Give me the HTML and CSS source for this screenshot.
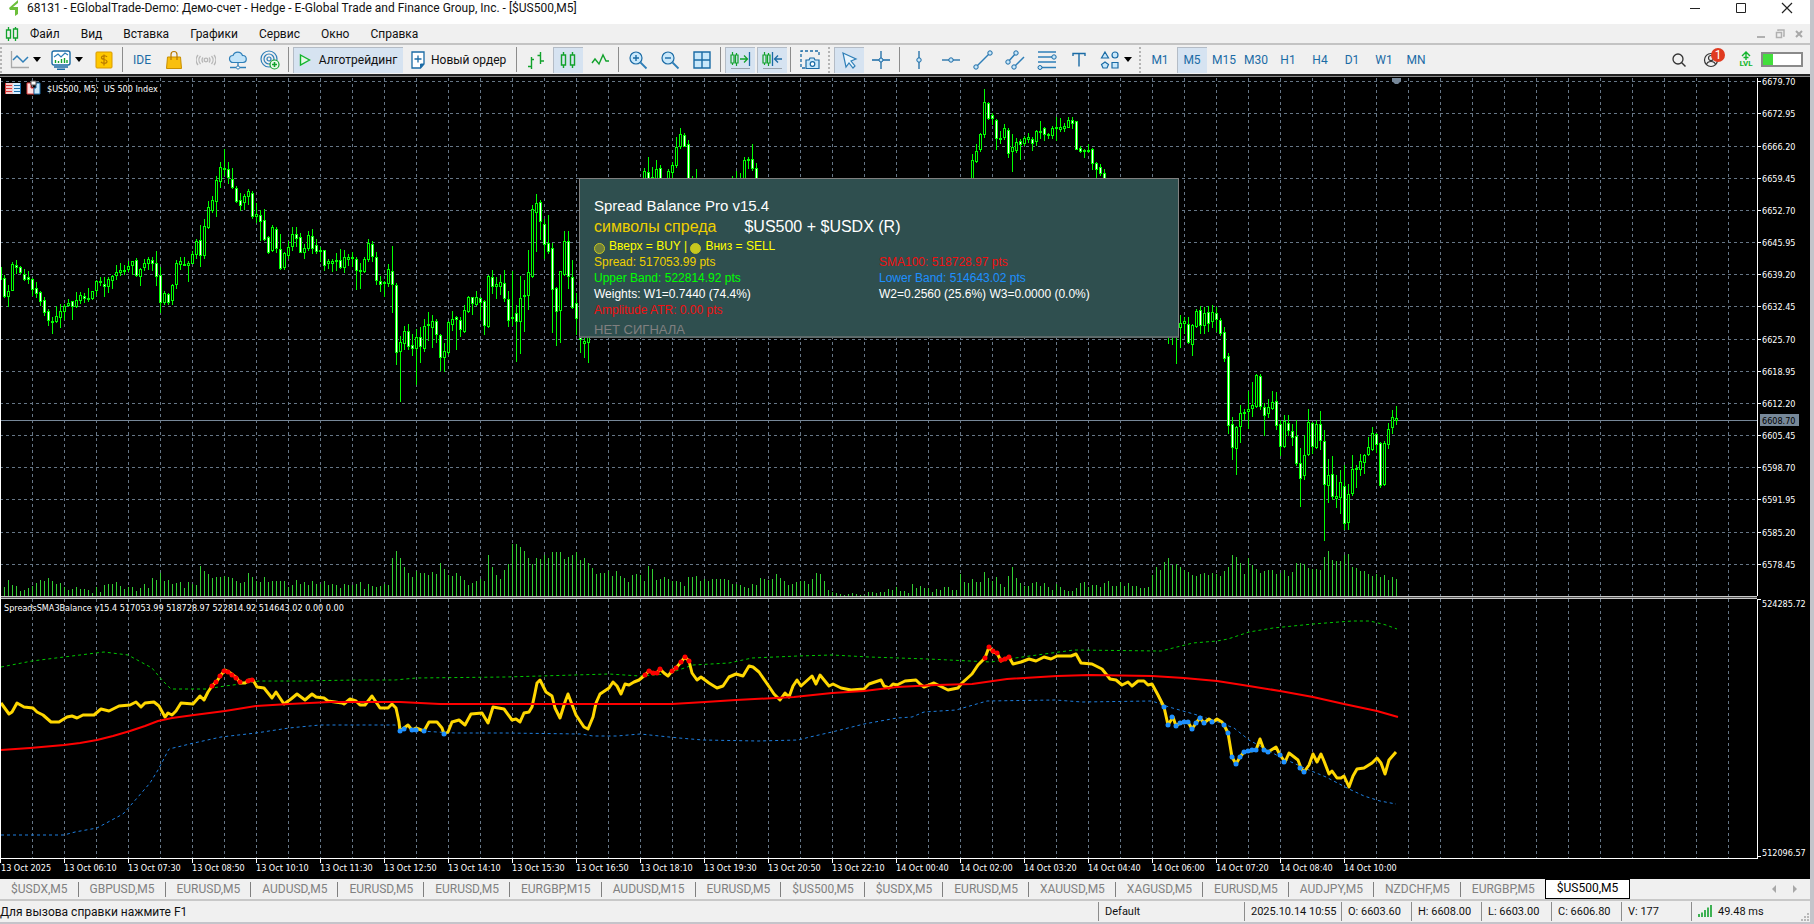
FILE: index.html
```html
<!DOCTYPE html>
<html lang="ru">
<head>
	<meta charset="UTF-8">
	<title>68131 - EGlobalTrade-Demo</title>
	<link rel="stylesheet" href="styles.css">
</head>
<body>
<div class="window">

	<header class="titlebar">
		<svg class="logo" width="12" height="16" viewBox="0 0 12 16"><path d="M10 0L1 8l1 2h5v6l3-2V7H5l5-4z" fill="#6cbf3a"/></svg>
		<span class="title">68131 - EGlobalTrade-Demo: Демо-счет - Hedge - E-Global Trade and Finance Group, Inc. - [$US500,M5]</span>
		<button type="button" class="win" aria-label="Свернуть"><svg width="12" height="12"><path d="M1 6.5h10" stroke="#222"/></svg></button>
		<button type="button" class="win" aria-label="Развернуть"><svg width="12" height="12"><path d="M1.5 1.5h9v9h-9z" fill="none" stroke="#222"/></svg></button>
		<button type="button" class="win" aria-label="Закрыть"><svg width="12" height="12"><path d="M1 1l10 10M11 1L1 11" stroke="#222" stroke-width="1.2"/></svg></button>
	</header>

	<nav class="menubar">
		<svg class="menu-icon" width="14" height="16" viewBox="0 0 14 16"><path d="M3.5 1v3M3.5 12v3M10.5 1v2M10.5 12v3M1.5 4h4v8h-4zM8.5 3h4v9h-4z" fill="none" stroke="#12a22c" stroke-width="1.3"/></svg>
		<button type="button">Файл</button>
		<button type="button">Вид</button>
		<button type="button">Вставка</button>
		<button type="button">Графики</button>
		<button type="button">Сервис</button>
		<button type="button">Окно</button>
		<button type="button">Справка</button>
		<div class="mdi">
			<button type="button" aria-label="Свернуть окно"><svg width="10" height="10"><path d="M1 8h8" stroke="#b0b0b0" stroke-width="2"/></svg></button>
			<button type="button" aria-label="Восстановить окно"><svg width="10" height="10"><path d="M3 2V1h6v6H8M1.5 3.5h5v5h-5z" fill="none" stroke="#b0b0b0" stroke-width="1.5"/></svg></button>
			<button type="button" aria-label="Закрыть окно"><svg width="10" height="10"><path d="M2 2l6 6M8 2L2 8" stroke="#a8a8a8" stroke-width="2"/></svg></button>
		</div>
	</nav>

	<div class="toolbar">
		<i class="grip first"></i>
		<button type="button" class="tb drop" aria-label="Тип графика">
			<svg width="20" height="20"><path d="M2.5 1v16.5H20" fill="none" stroke="#a9a9a9" stroke-width="1.3"/><path d="M4 10l4-4 6 6 5-5" fill="none" stroke="#2f7fb8" stroke-width="1.5"/></svg>
			<i class="caret"></i>
		</button>
		<button type="button" class="tb drop" aria-label="Индикаторы">
			<svg width="20" height="20"><rect x="1" y="1" width="18" height="14" rx="2" fill="#fff" stroke="#1b6ba5" stroke-width="1.4"/><path d="M3 7l4-3 3 3 4-4 3 2" fill="none" stroke="#2f7fb8" stroke-width="1.2"/><path d="M4.5 13v-3M7.5 13v-2M10.5 13V9M13.5 13V8M16 13v-3" stroke="#12a22c" stroke-width="1.4"/><path d="M3 17h14M6 19.3h8" stroke="#1b6ba5" stroke-width="1.5"/></svg>
			<i class="caret"></i>
		</button>
		<button type="button" class="tb" aria-label="Депозит"><svg width="20" height="20"><rect x="2" y="2" width="16" height="16" rx="1" fill="#ffc800" stroke="#d99a00"/><path d="M13 7c-1-2-6-1.5-5.5 1 .5 2 5 1 5.5 3.3.4 2.3-4.5 2.7-6 .5M10 4.5v11" fill="none" stroke="#b87800" stroke-width="1.2"/></svg></button>
		<i class="sep"></i>
		<button type="button" class="tb ide">IDE</button>
		<button type="button" class="tb" aria-label="Маркет"><svg width="20" height="20"><path d="M3.5 7h13l1 11.5h-15z" fill="#f9bf0f" stroke="#c98f00"/><path d="M7 10V4.5a3 3 0 0 1 6 0V10" fill="none" stroke="#b87800" stroke-width="1.2"/></svg></button>
		<button type="button" class="tb" aria-label="Сигналы"><svg width="20" height="20" fill="none" stroke="#b7b7b7" stroke-width="1.3"><circle cx="10" cy="10" r="1.8"/><path d="M7 7.500a4 4 0 0 0 0 5M13 7.500a4 4 0 0 1 0 5M4.500 6a6 6 0 0 0 0 8M15.500 6a6 6 0 0 1 0 8M2 5a8 8 0 0 0 0 10M18 5a8 8 0 0 1 0 10"/></svg></button>
		<button type="button" class="tb" aria-label="VPS"><svg width="20" height="20"><path d="M5 12.500a3.500 3.500 0 0 1 0-7 5 5 0 0 1 9.500 0 3.500 3.500 0 0 1 .5 7z" fill="#c3e4f9" stroke="#2f7fb8" stroke-width="1.2"/><path d="M10 12.500v4M2 17.500h6M12 17.500h6" stroke="#2f7fb8" stroke-width="1.3"/><circle cx="10" cy="17.500" r="1.6" fill="#fff" stroke="#2f7fb8"/></svg></button>
		<button type="button" class="tb" aria-label="Сеть"><svg width="20" height="20" fill="none" stroke="#2f7fb8" stroke-width="1.2"><circle cx="9" cy="9" r="8"/><circle cx="9" cy="9" r="5"/><circle cx="9" cy="9" r="2"/><circle cx="14.500" cy="14.500" r="4.500" fill="#e9f9ea" stroke="#12a22c"/><path d="M14.500 12v5M12 14.500h5" stroke="#12a22c" stroke-width="1.6"/></svg></button>
		<i class="sep"></i>
		<button type="button" class="tb on algo"><svg width="12" height="14"><path d="M1.5 2l9 5-9 5z" fill="#e6f8e8" stroke="#12b52c" stroke-width="1.4"/></svg>Алготрейдинг</button>
		<button type="button" class="tb order"><svg width="14" height="18"><path d="M1 1h12v12l-3.500 4H1z" fill="#fff" stroke="#1b6ba5" stroke-width="1.3"/><path d="M13 13H9.500v4" fill="#1b6ba5" stroke="#1b6ba5"/><path d="M7 4.500v7M3.500 8h7" stroke="#1b6ba5" stroke-width="1.3"/></svg>Новый ордер</button>
		<i class="sep"></i>
		<button type="button" class="tb" aria-label="Бары"><svg width="20" height="20"><path d="M5.5 7v12M2 16.500h3.500M5.500 9.500H8M14.500 2v12M11.500 5.500h3M14.500 11H18" stroke="#12a22c" stroke-width="1.4"/></svg></button>
		<button type="button" class="tb on" aria-label="Свечи"><svg width="20" height="20"><path d="M5.5 2v3M5.500 15v3M14.500 2v3M14.500 15v3M3.500 5h4v10h-4zM12.500 5h4v10h-4z" fill="none" stroke="#12a22c" stroke-width="1.4"/></svg></button>
		<button type="button" class="tb" aria-label="Линия"><svg width="20" height="20"><path d="M2 13l3-4 4 5 4-9 3 6h3" fill="none" stroke="#12a22c" stroke-width="1.4"/></svg></button>
		<i class="sep"></i>
		<button type="button" class="tb" aria-label="Увеличить"><svg width="20" height="20"><circle cx="8" cy="8" r="6" fill="#c9e8fb" stroke="#1b6ba5" stroke-width="1.2"/><path d="M8 5v6M5 8h6" stroke="#1b6ba5" stroke-width="1.4"/><path d="M12.500 12.500l6 6" stroke="#2f7fb8" stroke-width="1.8"/></svg></button>
		<button type="button" class="tb" aria-label="Уменьшить"><svg width="20" height="20"><circle cx="8" cy="8" r="6" fill="#c9e8fb" stroke="#1b6ba5" stroke-width="1.2"/><path d="M5 8h6" stroke="#1b6ba5" stroke-width="1.4"/><path d="M12.500 12.500l6 6" stroke="#2f7fb8" stroke-width="1.8"/></svg></button>
		<button type="button" class="tb" aria-label="Плитка"><svg width="20" height="20"><path d="M2 2h16v16H2zM10 2v16M2 10h16" fill="#c9e8fb" stroke="#1b6ba5" stroke-width="1.4"/></svg></button>
		<i class="sep"></i>
		<button type="button" class="tb on" aria-label="Автопрокрутка"><svg width="22" height="20"><path d="M3.500 2v3M3.500 13v2M7.500 3v2M7.500 13v3M2 5h3v8H2zM6.500 5h2.500v8H6.500z" fill="none" stroke="#12a22c" stroke-width="1.2"/><path d="M11 9h7M15 5.500L18.500 9 15 12.500" fill="none" stroke="#12a22c" stroke-width="1.3"/><path d="M20.500 2v14" stroke="#1b6ba5" stroke-width="1.3"/><path d="M2 18.500h19" stroke="#9aa3ad"/></svg></button>
		<button type="button" class="tb on" aria-label="Сдвиг графика"><svg width="22" height="20"><path d="M3.500 2v3M3.500 13v2M7.500 3v2M7.500 13v3M2 5h3v8H2zM6.500 5h2.500v8H6.500z" fill="none" stroke="#12a22c" stroke-width="1.2"/><path d="M21 9h-7M17 5.500L13.500 9l3.500 3.500" fill="none" stroke="#1b6ba5" stroke-width="1.3"/><path d="M11.500 2v14" stroke="#1b6ba5" stroke-width="1.3"/><path d="M2 18.500h19" stroke="#9aa3ad"/></svg></button>
		<i class="sep"></i>
		<button type="button" class="tb" aria-label="Снимок экрана"><svg width="20" height="20"><path d="M5 18H1V1h18v6" fill="none" stroke="#1b6ba5" stroke-width="1.3" stroke-dasharray="3 2"/><path d="M6 10h3l1-2h4l1 2h4v8.500H6z" fill="#c9e8fb" stroke="#1b6ba5" stroke-width="1.2"/><circle cx="12.500" cy="14" r="2.3" fill="#fff" stroke="#1b6ba5" stroke-width="1.2"/></svg></button>
		<i class="grip"></i>
		<button type="button" class="tb on" aria-label="Курсор"><svg width="20" height="20"><path d="M4 3l13 6-5 2 4 5-2 2-4-5-3 4z" fill="#e9f5fd" stroke="#2f7fb8" stroke-width="1.2"/></svg></button>
		<button type="button" class="tb" aria-label="Перекрестие"><svg width="20" height="20"><path d="M10 1v18M1 10h18" stroke="#1b6ba5" stroke-width="1.3"/><circle cx="10" cy="10" r="2" fill="#c9e8fb" stroke="#1b6ba5"/></svg></button>
		<i class="sep"></i>
		<button type="button" class="tb" aria-label="Вертикальная линия"><svg width="20" height="20"><path d="M10 1v18" stroke="#1b6ba5" stroke-width="1.3"/><circle cx="10" cy="10" r="2.2" fill="#c9e8fb" stroke="#1b6ba5"/></svg></button>
		<button type="button" class="tb" aria-label="Горизонтальная линия"><svg width="20" height="20"><path d="M1 10h18" stroke="#1b6ba5" stroke-width="1.3"/><circle cx="10" cy="10" r="2.2" fill="#c9e8fb" stroke="#1b6ba5"/></svg></button>
		<button type="button" class="tb" aria-label="Трендовая линия"><svg width="20" height="20"><path d="M3 17L17 3" stroke="#2f7fb8" stroke-width="1.5"/><circle cx="3" cy="17" r="2.2" fill="#c9e8fb" stroke="#1b6ba5"/><circle cx="17" cy="3" r="2.2" fill="#c9e8fb" stroke="#1b6ba5"/></svg></button>
		<button type="button" class="tb" aria-label="Канал"><svg width="20" height="20"><path d="M3 12l8-9M9 17L19 7" stroke="#2f7fb8" stroke-width="1.5"/><circle cx="3" cy="12" r="2.2" fill="#c9e8fb" stroke="#1b6ba5"/><circle cx="11" cy="3" r="2.2" fill="#c9e8fb" stroke="#1b6ba5"/><circle cx="9" cy="17" r="2.2" fill="#c9e8fb" stroke="#1b6ba5"/></svg></button>
		<button type="button" class="tb" aria-label="Фибоначчи"><svg width="20" height="20"><path d="M1 2h18M1 7h18M1 12h18M1 17.500h18" stroke="#2f7fb8" stroke-width="1.4"/><circle cx="17" cy="7" r="2.2" fill="#c9e8fb" stroke="#1b6ba5"/><circle cx="3" cy="17.500" r="2" fill="#c9e8fb" stroke="#1b6ba5"/></svg></button>
		<button type="button" class="tb" aria-label="Текст"><svg width="20" height="20"><path d="M4 6V3.500h12V6M10 3.500v13" fill="none" stroke="#1b6ba5" stroke-width="1.4"/></svg></button>
		<button type="button" class="tb drop" aria-label="Объекты">
			<svg width="20" height="20" fill="#c9e8fb" stroke="#1b6ba5" stroke-width="1.2"><path d="M5 2l3.500 6h-7zM5 12l3.500 2.500L7 18H3l-1.500-3.500zM12 12.500h6V18h-6z"/><circle cx="15" cy="5" r="3"/></svg>
			<i class="caret"></i>
		</button>
		<i class="grip"></i>
		<button type="button" class="tb tf">M1</button>
		<button type="button" class="tb tf on">M5</button>
		<button type="button" class="tb tf">M15</button>
		<button type="button" class="tb tf">M30</button>
		<button type="button" class="tb tf">H1</button>
		<button type="button" class="tb tf">H4</button>
		<button type="button" class="tb tf">D1</button>
		<button type="button" class="tb tf">W1</button>
		<button type="button" class="tb tf">MN</button>
		<div class="right">
			<button type="button" class="tb" aria-label="Поиск"><svg width="16" height="16"><circle cx="7" cy="7" r="5" fill="none" stroke="#333" stroke-width="1.3"/><path d="M10.500 10.500l4 4" stroke="#333" stroke-width="1.5"/></svg></button>
			<button type="button" class="tb user" aria-label="Уведомления"><svg width="16" height="16" fill="none" stroke="#333" stroke-width="1.2"><circle cx="8" cy="8" r="6.500"/><circle cx="8" cy="6" r="2.500"/><path d="M3.500 12.500c1-4 8-4 9 0"/></svg><span class="badge">1</span></button>
			<span class="lvl"><svg width="10" height="9"><path d="M5 9V1M1 5l4-4 4 4M2.500 6.500h5" fill="none" stroke="#12b52c" stroke-width="1.4"/></svg>LVL</span>
			<span class="battery"><i></i></span>
		</div>
	</div>

	<main class="chart">
		<div class="plot">
			<svg id="plot" width="100%" height="801"></svg>
			<section class="panel">
				<h1>Spread Balance Pro v15.4</h1>
				<p class="symbols"><span class="gold">символы спреда</span><span>$US500 + $USDX (R)</span></p>
				<p class="hint"><i class="dot dim"></i>Вверх = BUY | <i class="dot"></i>Вниз = SELL</p>
				<div class="values">
					<span class="gold">Spread: 517053.99 pts</span><span class="red">SMA100: 518728.97 pts</span>
					<span class="green">Upper Band: 522814.92 pts</span><span class="blue">Lower Band: 514643.02 pts</span>
					<span>Weights: W1=0.7440 (74.4%)</span><span>W2=0.2560 (25.6%) W3=0.0000 (0.0%)</span>
					<span class="red">Amplitude ATR: 0.00 pts</span>
				</div>
				<p class="signal">НЕТ СИГНАЛА</p>
			</section>
		</div>
		<svg id="axis" width="53" height="801"></svg>
	</main>

	<nav class="tabs">
		<button type="button">$USDX,M5</button>
		<button type="button">GBPUSD,M5</button>
		<button type="button">EURUSD,M5</button>
		<button type="button">AUDUSD,M5</button>
		<button type="button">EURUSD,M5</button>
		<button type="button">EURUSD,M5</button>
		<button type="button">EURGBP,M15</button>
		<button type="button">AUDUSD,M15</button>
		<button type="button">EURUSD,M5</button>
		<button type="button">$US500,M5</button>
		<button type="button">$USDX,M5</button>
		<button type="button">EURUSD,M5</button>
		<button type="button">XAUUSD,M5</button>
		<button type="button">XAGUSD,M5</button>
		<button type="button">EURUSD,M5</button>
		<button type="button">AUDJPY,M5</button>
		<button type="button">NZDCHF,M5</button>
		<button type="button">EURGBP,M5</button>
		<button type="button" class="active">$US500,M5</button>
		<svg class="scroll" width="26" height="10"><path d="M4 1v8L0 5zM21 1v8l4-4z" fill="#a8a8a8"/></svg>
	</nav>

	<footer class="statusbar">
		<span class="help">Для вызова справки нажмите F1</span>
		<span class="cell profile">Default</span>
		<span class="cell date">2025.10.14 10:55</span>
		<span class="cell">O: 6603.60</span>
		<span class="cell">H: 6608.00</span>
		<span class="cell">L: 6603.00</span>
		<span class="cell">C: 6606.80</span>
		<span class="cell">V: 177</span>
		<span class="cell ping"><svg width="14" height="12"><path d="M1 12V9M4 12V7.500M7 12V5M10 12V2.500M13 12V0" stroke="#12a22c" stroke-width="1.6"/></svg>49.48 ms</span>
		<svg class="resize" width="9" height="9"><path d="M6 0h2v2H6zM3 3h2v2H3zM6 3h2v2H6zM0 6h2v2H0zM3 6h2v2H3zM6 6h2v2H6z" fill="#b8b8b8"/></svg>
	</footer>
</div>
<script src="chart.js"></script>
</body>
</html>
```
FILE: styles.css
```css
body{
	margin: 0;
	background: #c4c4ca;
	font: 12px/16px Roboto, "Noto Sans", sans-serif;
	color: #111;
}

button{
	margin: 0;
	padding: 0;
	border: 0;
	background: none;
	font: inherit;
	color: inherit;
}

h1, p{
	margin: 0;
	font-weight: normal;
}

.window{
	margin-right: 4px;
	background: #f0f0f0;
}

/* title and menu */
.titlebar{
	display: flex;
	align-items: center;
	height: 24px;
	padding: 0 0 8px 8px;
	box-sizing: border-box;
	background: #fff;
}

.logo{
	margin-right: 7px;
}

.title{
	flex: 1;
	white-space: nowrap;
}

.win{
	width: 46px;
	display: flex;
	justify-content: center;
}

.menubar{
	display: flex;
	align-items: center;
	height: 19px;
	padding-left: 5px;
	border-bottom: 2px solid #c3c3c3;
}

.menubar > button{
	padding: 0 10px 0 11px;
}

.mdi{
	display: flex;
	gap: 9px;
	margin-left: auto;
	margin-right: 6px;
}

.mdi button{
	display: flex;
}

/* toolbar */
.toolbar{
	display: flex;
	align-items: center;
	gap: 2px;
	height: 29px;
	border-bottom: 2px solid #222;
	white-space: nowrap;
}

.tb{
	display: flex;
	align-items: center;
	justify-content: center;
	flex: none;
	width: 30px;
	height: 26px;
}

.tb.on{
	background: #d6e3f1;
	box-shadow: inset 1px 1px 0 #b4bcc6;
}

.tb.drop{
	width: 40px;
	gap: 4px;
}

.caret{
	border: 4px solid transparent;
	border-top: 5px solid #000;
	border-bottom: 0;
}

.tb.ide, .tb.tf{
	color: #1b6ba5;
}

.tb.algo{
	width: 110px;
	gap: 8px;
}

.tb.order{
	width: 108px;
	gap: 6px;
	justify-content: flex-start;
	padding-left: 6px;
	box-sizing: border-box;
}

.sep{
	flex: none;
	width: 1px;
	height: 25px;
	margin: 0 2px 0 1px;
	background: #8c8c8c;
}

.grip{
	flex: none;
	height: 26px;
	margin: 0 2px 0 1px;
	border-left: 2px dotted #b4b4b4;
}

.grip.first{
	margin: 0 1px 0 0;
}

.right{
	display: flex;
	align-items: center;
	gap: 2px;
	margin-left: auto;
	padding-right: 7px;
}

.user{
	position: relative;
}

.badge{
	position: absolute;
	top: 1px;
	right: 1px;
	width: 14px;
	height: 14px;
	border-radius: 7px;
	background: #e03a20;
	color: #fff;
	line-height: 14px;
}

.lvl{
	display: flex;
	flex-direction: column;
	align-items: center;
	width: 26px;
	margin-left: 5px;
	font-size: 8px;
	line-height: 8px;
	font-weight: bold;
	color: #12b52c;
}

.battery{
	width: 38px;
	height: 11px;
	border: 2px solid #8a8a8a;
	background: #fff;
}

.battery i{
	display: block;
	width: 10px;
	height: 11px;
	background: #43df3c;
}

/* chart */
.chart{
	display: flex;
	border-top: 1px solid #8a8a8a;
	background: #000;
	padding-top: 1px;
}

.chart svg{
	display: block;
	font: 9px "DejaVu Sans Condensed", "DejaVu Sans", sans-serif;
	fill: #fff;
}

.plot{
	position: relative;
	flex: 1;
	min-width: 0;
	overflow: hidden;
}

.crisp{
	shape-rendering: crispEdges;
	fill: none;
}

.grid{
	stroke: #667686;
	stroke-dasharray: 3 3;
}

.frame{
	stroke: #fff;
}

.price{
	stroke: #778899;
}

.divider{
	stroke: #c8c8c8;
}

.wick, .up, .down{
	stroke: #0f0;
}

.up{
	fill: #000;
}

.down{
	fill: #fff;
}

.volume{
	stroke: #32cd32;
}

.spread, .sma{
	fill: none;
	stroke: gold;
	stroke-width: 3;
	stroke-linejoin: round;
}

.sma{
	stroke: #f00;
	stroke-width: 2;
}

.upper, .lower{
	fill: none;
	stroke: #00c800;
	stroke-dasharray: 3 3;
}

.lower{
	stroke: #1e7fe0;
}

/* indicator window over the chart */
.panel{
	position: absolute;
	left: 579px;
	top: 100px;
	width: 600px;
	height: 160px;
	box-sizing: border-box;
	padding: 17px 14px 0;
	border: 1px solid #808080;
	border-bottom: 2px solid #5d6a6a;
	background: #2f4f4f;
	color: #fff;
	font: 12px/16px "Liberation Sans", Arial, sans-serif;
}

.panel h1{
	font-size: 15px;
	line-height: 20px;
}

.symbols{
	display: flex;
	gap: 28px;
	font-size: 16px;
	line-height: 22px;
}

.hint{
	color: #ff0;
}

.values{
	display: grid;
	grid-template-columns: 285px 1fr;
}

.signal{
	font-size: 13px;
	line-height: 24px;
	color: #808080;
}

.gold{
	color: #f0d000;
}

.red{
	color: #f01010;
}

.green{
	color: #0f0;
}

.blue{
	color: #1e90ff;
}

.dot{
	display: inline-block;
	width: 9px;
	height: 9px;
	margin-right: 4px;
	border: 1px solid #c8c81e;
	border-radius: 50%;
	background: #c8c81e;
	vertical-align: -4px;
}

.dot.dim{
	background: #6f7f3a;
}

/* chart tabs */
.tabs{
	display: flex;
	align-items: center;
	height: 20px;
	border-bottom: 2px solid #c8c8c8;
	color: #808080;
	white-space: nowrap;
}

.tabs button{
	padding: 0 10px 0 11px;
	line-height: 15px;
	border-right: 1px solid #808080;
}

.tabs button:nth-last-of-type(2){
	border-right: 0;
}

.tabs .active{
	padding: 1px 11px 2px;
	border: 1px solid #000;
	background: #fff;
	color: #000;
}

.scroll{
	margin-left: auto;
	margin-right: 12px;
}

/* status bar */
.statusbar{
	display: flex;
	align-items: center;
	height: 21px;
	white-space: nowrap;
}

.help{
	flex: 1;
}

.cell{
	width: 63px;
	padding-left: 6px;
	border-left: 1px solid #8c8c8c;
	font-size: 11px;
	line-height: 19px;
}

.profile{
	width: 139px;
}

.date{
	width: 90px;
}

.ping{
	width: 103px;
}

.ping svg{
	margin-right: 6px;
	vertical-align: -2px;
}

.resize{
	align-self: flex-end;
}
```
FILE: chart.js
```js
// y values are window pixels, the chart area starts at TOP
var TOP = 78;
var STEP = 4;      // pixels per bar
var BASE = 596;    // bottom of the price pane
var SUB = 599;     // top of the indicator pane
var BOTTOM = 858;
var WIDTH = 4000;  // drawn wider than the pane, cut off by it

// [first bar, "high top bottom low direction; ..."]
var candles = [
	[0, "267 267 279 279 d;275 278 296 297 d;285 291 296 306 u;262 264 290 290 u;260 265 267 273 d;266 267 272 273 d;269 274 279 280 d;271 277 279 283 d;278 279 289 295 d;282 288 293 297 d;" +
		"291 292 301 305 d;297 300 312 315 d;309 311 320 325 d;317 321 322 333 u;306 316 321 322 u;304 311 317 327 u;304 306 311 319 u;299 303 305 306 u;301 301 306 319 d;292 300 306 307 u;" +
		"292 295 300 303 u;293 296 298 302 d;288 298 299 301 u;291 291 298 299 u;280 281 290 295 u;277 281 282 285 u;277 284 286 296 d;277 279 286 292 u;275 276 280 288 u;265 272 275 279 u;" +
		"263 270 272 275 u;265 270 271 274 u;261 266 269 271 u;261 261 265 274 u;258 260 275 276 d;268 269 276 285 u;259 263 267 270 u;257 259 263 269 u;257 260 263 270 d;251 263 276 285 d;" +
		"267 275 302 312 d;291 293 302 304 u;293 294 302 304 d;284 285 300 304 u;260 263 284 288 u;257 261 264 269 u;257 264 265 265 u;261 263 265 281 u;251 254 263 263 u;239 241 254 258 u;" +
		"225 240 255 266 d;219 226 255 258 u;201 207 227 228 u;196 200 210 212 u;176 180 201 216 u;162 167 181 187 u;149 168 169 175 u;162 169 177 183 d;168 179 187 188 d;186 188 201 202 d;" +
		"193 200 205 210 d;194 196 202 209 u;189 191 196 204 u;191 193 216 218 d;203 214 216 222 u;210 215 221 240 d;209 220 239 240 d;236 237 252 253 d;225 227 250 251 u;227 229 248 252 d;" +
		"234 249 268 269 d;252 253 267 269 u;241 247 255 258 u;227 234 246 250 u;227 234 238 246 d;233 237 252 252 d;244 248 252 258 u;231 235 248 250 u;229 236 248 253 d;239 245 251 253 d;" +
		"247 250 251 261 u;250 250 265 270 d;259 261 263 268 u;259 261 263 271 u;253 260 261 270 u;249 260 267 268 d;250 257 267 272 u;254 257 259 265 u;252 257 258 266 u;257 259 270 289 d;" +
		"263 270 271 288 u;257 259 271 272 u;239 243 259 261 u;241 244 256 261 d;252 257 280 284 d;276 281 284 291 d;281 282 283 296 u;264 269 283 286 u;246 271 284 312 d;283 285 352 364 d;" +
		"336 342 351 401 u;326 331 343 349 u;324 331 346 349 d;334 345 348 355 d;329 337 348 384 u;327 337 346 362 d;319 326 348 351 u;312 324 325 340 u;315 321 327 347 u;319 321 334 342 d;" +
		"334 335 357 370 d;343 351 357 371 u;321 322 352 354 u;311 319 324 330 u;316 317 319 349 d;317 320 329 336 d;305 310 331 332 u;296 297 311 312 u;297 297 303 314 d;291 297 304 305 u;" +
		"297 298 302 319 d;300 301 325 334 d;275 276 326 327 u;270 277 286 293 d;277 284 286 298 u;275 282 286 294 u;270 283 298 301 d;291 299 320 326 d;271 317 318 325 u;305 313 321 361 d;" +
		"276 298 321 353 u;280 295 296 331 u;250 272 295 309 u;205 209 276 277 u;194 203 212 251 u;200 202 221 239 d;219 224 244 258 d;215 243 251 253 d;243 248 289 332 d;287 288 311 345 d;" +
		"271 271 310 342 u;231 241 274 275 u;231 241 276 288 d;260 277 307 308 d;293 303 318 334 d;320 325 339 352 d;325 341 343 357 u;325 327 342 362 u"],
	[161, "168 171 200 210 u;157 172 200 210 d;167 177 200 210 d;160 169 200 210 u;165 168 200 210 d;179 185 200 210 u;169 171 200 210 u;162 165 172 177 u;137 147 165 167 u;128 134 146 148 u;" +
		"133 135 146 146 d;140 144 180 190 d;176 185 200 210 u;169 185 200 210 u"],
	[183, "176 185 200 210 u;171 185 200 210 u;173 185 200 210 u;157 160 180 190 u;157 159 160 168 u;144 159 168 170 d;163 168 180 190 d"],
	[243, "154 160 180 190 u;144 151 161 162 u;133 134 149 151 u;89 102 134 137 u;102 103 118 119 d;113 115 118 124 d;119 120 138 149 d;131 138 139 143 u;124 128 137 139 u;128 130 153 157 d;" +
		"134 147 151 171 u;138 142 150 152 u;139 141 144 159 d;136 138 143 145 u;133 137 139 142 u;137 139 143 150 d;130 131 141 145 u;121 131 132 138 u;127 128 134 140 d;133 134 135 138 u;" +
		"126 128 135 138 u;117 127 128 140 u;118 127 129 131 u;123 126 128 131 u;117 120 127 127 u;117 120 123 128 d;121 121 149 149 d;146 148 151 152 d;149 150 151 157 u;144 150 151 152 u;" +
		"148 149 163 169 d;162 163 169 180 d;164 167 173 175 d;169 173 180 190 d"],
	[292, "320 325 330 343 u;320 325 330 344 u;320 325 330 363 u;315 323 327 347 u;317 321 323 333 u;317 324 342 343 d;324 325 344 355 u;309 311 326 327 u;" +
		"306 310 325 333 d;307 313 325 333 u;306 312 323 331 d;305 312 321 327 u;307 313 319 331 d;318 320 333 335 d;327 332 358 361 d;353 356 425 433 d;417 424 447 459 d;426 427 448 474 u;" +
		"405 413 426 442 u;409 412 413 419 u;391 409 411 428 u;382 405 408 416 u;374 375 406 407 u;374 376 406 409 d;403 407 415 435 d;399 407 413 417 u;391 402 408 409 u;392 401 425 429 d;" +
		"420 424 446 455 d;415 421 446 447 u;415 423 430 435 d;424 431 437 445 d;420 436 463 465 d;448 463 478 506 d;435 455 475 479 u;409 422 454 455 u;422 423 446 453 d;420 424 447 448 u;" +
		"411 424 440 449 d;430 441 484 540 d;459 475 485 502 u;456 474 496 499 d;475 496 498 507 u;470 482 497 513 u;465 486 523 529 d;484 494 522 529 u;455 469 493 495 u;465 468 469 487 u;" +
		"454 461 469 475 u;454 455 462 473 u;437 447 454 455 u;427 433 449 450 u;433 434 444 452 d;442 443 485 487 d;441 443 484 485 u;423 429 444 448 u;410 417 427 433 u;406 418 420 424 u"]
];

// tick volume, bar 1 onwards
var volume = [
	9,16,11,10,5,6,8,10,13,16,15,18,15,12,13,9,6,7,9,7,7,6,3,9,4,11,12,12,14,10,7,9,9,5,8,12,8,18,16,23,
	15,16,12,13,14,8,14,12,11,30,25,22,18,19,19,20,19,18,15,13,14,23,19,15,14,19,14,15,15,15,15,9,11,16,12,14,11,15,12,12,
	15,11,12,11,8,12,11,11,12,14,7,12,10,9,10,12,11,38,45,38,29,23,19,25,23,23,21,24,22,33,27,21,20,23,20,16,11,13,15,17,
	15,41,29,21,17,26,32,52,52,49,45,38,32,38,37,41,38,44,44,44,37,39,41,44,36,38,33,28,22,23,23,25,20,25,20,18,14,21,22,21,
	15,30,27,16,17,19,17,15,15,14,10,19,19,20,15,17,15,17,17,17,17,16,12,12,11,9,8,12,11,18,17,16,17,22,18,15,11,12,14,15,
	15,12,17,23,22,15,6,4,3,2,1,2,3,2,1,1,4,4,3,4,4,7,6,9,5,5,3,12,8,10,8,8,4,7,6,9,9,6,6,22,
	14,13,17,14,14,24,18,15,19,12,9,20,29,18,13,10,10,13,14,10,13,9,6,12,9,6,5,5,8,13,14,9,11,11,9,13,15,10,10,14,
	10,13,10,10,8,8,9,21,29,26,34,38,31,32,29,26,24,21,20,22,23,21,23,22,20,25,29,41,39,33,22,38,31,27,23,25,26,26,22,23,
	26,20,24,33,33,32,28,27,27,26,39,45,36,35,35,41,42,29,28,25,25,22,20,22,19,21,16,19,17
];

var spread = "1,703 9,714 12,712 17,703 24,707 33,708 37,712 43,715 51,722 59,722 67,717 72,716 77,718 83,715 94,715 101,709 109,711 119,706 130,705 136,702 141,707 145,703 154,702 159,706 165,717 168,713 172,715 176,711 181,703 193,704 200,696 204,700 208,692 212,686 217,681 221,675 225,670 229,672 237,678 240,683 245,683 249,680 253,680 257,687 264,688 272,698 276,692 284,704 291,699 297,694 305,700 312,694 316,697 324,698 328,701 342,703 344,704 350,699 356,701 360,705 365,705 372,696 380,708 388,708 392,704 396,708 399,722 400,731 408,725 412,730 416,728 424,731 429,722 437,722 442,728 444,734 448,732 452,722 459,720 465,725 471,714 482,713 488,723 493,707 504,709 512,720 516,719 520,722 524,713 529,712 532,707 535,693 537,683 540,680 546,692 552,696 555,708 560,718 565,702 568,694 576,715 584,727 588,729 593,717 596,703 600,694 609,688 613,682 617,686 621,694 625,684 629,685 634,682 639,680 645,675 649,671 653,673 657,673 660,669 664,673 668,676 672,671 676,668 681,662 685,657 689,661 692,673 697,680 701,677 709,683 717,688 723,686 729,677 736,674 743,676 749,666 753,667 759,672 770,688 774,694 780,700 785,693 789,697 793,686 797,680 801,686 812,676 816,684 820,675 829,686 833,684 841,688 851,690 864,689 869,684 881,680 884,686 889,688 893,684 897,685 905,681 916,680 920,684 924,687 934,683 942,687 948,690 958,688 962,683 972,674 978,665 985,658 989,647 993,652 997,653 1001,661 1005,659 1009,657 1013,664 1021,662 1029,659 1036,661 1044,657 1051,659 1057,656 1071,656 1076,654 1081,663 1092,664 1102,669 1110,679 1116,680 1122,685 1128,682 1132,686 1138,681 1144,681 1148,685 1152,684 1158,695 1164,707 1168,725 1173,717 1176,726 1180,723 1188,722 1192,729 1196,723 1200,718 1204,723 1209,719 1213,722 1217,719 1222,722 1224,725 1228,733 1232,757 1236,764 1240,757 1244,752 1256,750 1260,739 1264,750 1268,752 1276,747 1280,755 1285,762 1289,753 1298,760 1301,768 1304,772 1309,765 1313,754 1317,762 1321,754 1324,761 1329,774 1332,771 1337,778 1341,778 1344,776 1349,787 1353,776 1357,769 1364,768 1372,763 1377,758 1381,763 1385,774 1389,760 1396,752";
var sma = "1,750 30,748 64,745 80,743 97,740 113,736 130,731 145,726 158,721 172,718 194,715 225,711 256,706 289,704 330,702 400,702 440,704 672,704 705,702 736,700 794,697 832,693 864,691 897,687 936,685 972,684 1007,679 1057,676 1090,675 1152,676 1184,678 1217,681 1249,686 1280,691 1313,697 1344,704 1377,711 1398,717";
var upper = "1,667 32,661 64,657 104,652 128,655 152,668 162,680 171,689 206,689 225,686 241,684 259,681 300,681 356,680 395,680 416,678 506,677 609,674 640,676 667,674 693,665 729,663 752,658 798,656 832,655 869,657 928,659 991,662 1015,658 1074,650 1161,651 1193,643 1217,641 1228,639 1249,632 1273,628 1313,624 1352,621 1370,621 1386,625 1397,629";
var lower = "1,835 64,835 75,832 97,828 110,821 123,814 138,797 150,783 158,770 169,749 194,743 221,737 256,733 289,728 320,725 395,725 419,731 455,733 506,733 581,734 593,736 617,736 640,734 679,738 703,740 758,741 798,740 810,737 832,732 864,724 897,718 912,717 924,712 956,710 987,701 1055,700 1082,702 1152,701 1169,707 1197,715 1218,722 1234,728 1249,740 1280,757 1309,770 1326,777 1349,789 1364,796 1380,801 1396,804";
var sell = "212,686 216,682 220,676 224,671 228,672 232,675 236,678 240,682 248,681 252,680 645,675 649,671 653,673 657,673 660,669 672,671 676,668 681,662 685,657 689,661 985,658 989,647 993,651 997,653 1001,660 1005,659 1009,657";
var buy = "400,731 404,729 412,730 416,730 424,731 444,734 1164,707 1168,725 1172,717 1176,726 1180,723 1184,722 1188,722 1192,729 1196,723 1200,718 1204,723 1212,722 1224,725 1228,733 1232,757 1236,764 1240,757 1244,752 1248,751 1252,750 1256,750 1264,750 1268,752 1280,755 1284,762 1300,768 1304,772";

var levels = [81, 113, 146, 178, 210, 242, 274, 306, 339, 371, 403, 435, 467, 499, 532, 564];
var times = ["13 Oct 2025", "13 Oct 06:10", "13 Oct 07:30", "13 Oct 08:50", "13 Oct 10:10", "13 Oct 11:30", "13 Oct 12:50", "13 Oct 14:10",
	"13 Oct 15:30", "13 Oct 16:50", "13 Oct 18:10", "13 Oct 19:30", "13 Oct 20:50", "13 Oct 22:10", "14 Oct 00:40", "14 Oct 02:00",
	"14 Oct 03:20", "14 Oct 04:40", "14 Oct 06:00", "14 Oct 07:20", "14 Oct 08:40", "14 Oct 10:00"];

function path(cls, d) {
	return '<path class="crisp ' + cls + '" d="' + d + '"/>';
}

function line(cls, points) {
	return '<polyline class="' + cls + '" points="' + points + '"/>';
}

function text(x, y, s) {
	return '<text x="' + x + '" y="' + y + '">' + s + '</text>';
}

function dots(points, color) {
	return points.split(" ").map(function(p) {
		var xy = p.split(",");
		return '<circle cx="' + xy[0] + '" cy="' + xy[1] + '" r="2.5" fill="' + color + '"/>';
	}).join("");
}

function drawPlot() {
	var grid = "", vol = "", wick = "", up = "", down = "", ticks = "", labels = "";
	levels.forEach(function(y) {
		grid += "M0 " + (y + 0.5) + "H" + WIDTH;
	});
	for (var x = 32; x < WIDTH; x += 32) {
		grid += "M" + (x + 0.5) + " " + TOP + "V" + BASE + "M" + (x + 0.5) + " " + SUB + "V" + BOTTOM;
	}
	volume.forEach(function(v, i) {
		vol += "M" + ((i + 1) * STEP + 0.5) + " " + BASE + "v-" + v;
	});
	candles.forEach(function(run) {
		run[1].split(";").forEach(function(c, i) {
			var v = c.split(" ");
			var x = (run[0] + i) * STEP;
			wick += "M" + (x + 0.5) + " " + v[0] + "V" + (+v[3] + 1);
			var body = "M" + (x - 0.5) + " " + (+v[1] + 0.5) + "h2V" + (+v[2] + 0.5) + "h-2z";
			if (v[4] == "u") {
				up += body;
			}
			else {
				down += body;
			}
		});
	});
	times.forEach(function(t, i) {
		labels += text(i * 64 || 1, 871, t);
		ticks += "M" + (i * 64 + 0.5) + " " + BOTTOM + "v5";
	});

	document.querySelector("#plot").innerHTML = '<g transform="translate(0,-' + TOP + ')">' +
		path("grid", grid) +
		path("volume", vol) +
		path("price", "M0 420.5H" + WIDTH) +
		path("wick", wick) + path("up", up) + path("down", down) +
		'<rect x="0" y="596" width="' + WIDTH + '" height="3" fill="#555"/>' +
		path("divider", "M0 596.5H" + WIDTH + "M0 598.5H" + WIDTH) +
		line("upper", upper) + line("lower", lower) + line("spread", spread) + line("sma", sma) +
		dots(sell, "#f00") + dots(buy, "#1e90ff") +
		path("frame", "M0.5 78V858M0 858.5H" + WIDTH + ticks) +
		'<path d="M1392 78h9v3l-3 3h-3l-3-3z" fill="#778899"/>' +
		// panel icons beside the symbol name
		'<path d="M5 83h8v11H5z" fill="#f6c9c9"/><path d="M13 83h8v11h-8z" fill="#d4ecff"/>' +
		'<path d="M6 85.5h6M6 88.5h6M6 91.5h6M5.5 83v11" stroke="#d93a3a"/><path d="M14 85.5h6M14 88.5h6M14 91.5h6M20.5 83v11" stroke="#1b6ba5"/>' +
		'<path d="M27 83h4v5h3v6h-7z" fill="#ffdede" stroke="#d93a3a"/><path d="M40 83h-4v5h-2v6h6z" fill="#c9e8fb" stroke="#1b6ba5"/><path d="M31 81h5v4h-5z" fill="#fff" stroke="#555"/>' +
		text(47, 92, "$US500, M5:&#160; US 500 Index") +
		text(4, 611, "SpreadsSMA3Balance v15.4 517053.99 518728.97 522814.92 514643.02 0.00 0.00") +
		labels + '</g>';
}

function drawAxis() {
	var ticks = "", labels = "";
	levels.forEach(function(y, i) {
		ticks += "M0 " + (y + 0.5) + "h4";
		labels += text(5, y + 4, (6679.70 - i * 6.75).toFixed(2));
	});
	document.querySelector("#axis").innerHTML = '<g transform="translate(0,-' + TOP + ')">' +
		path("frame", "M0.5 78V596M0.5 599V859M0 599.5h4M0 856.5h4" + ticks) +
		labels + text(5, 607, "524285.72") + text(5, 856, "512096.57") +
		'<rect x="3" y="414" width="39" height="12" fill="#778899"/>' +
		'<text x="5" y="424" style="fill: #000">6608.70</text></g>';
}

drawPlot();
drawAxis();
```
